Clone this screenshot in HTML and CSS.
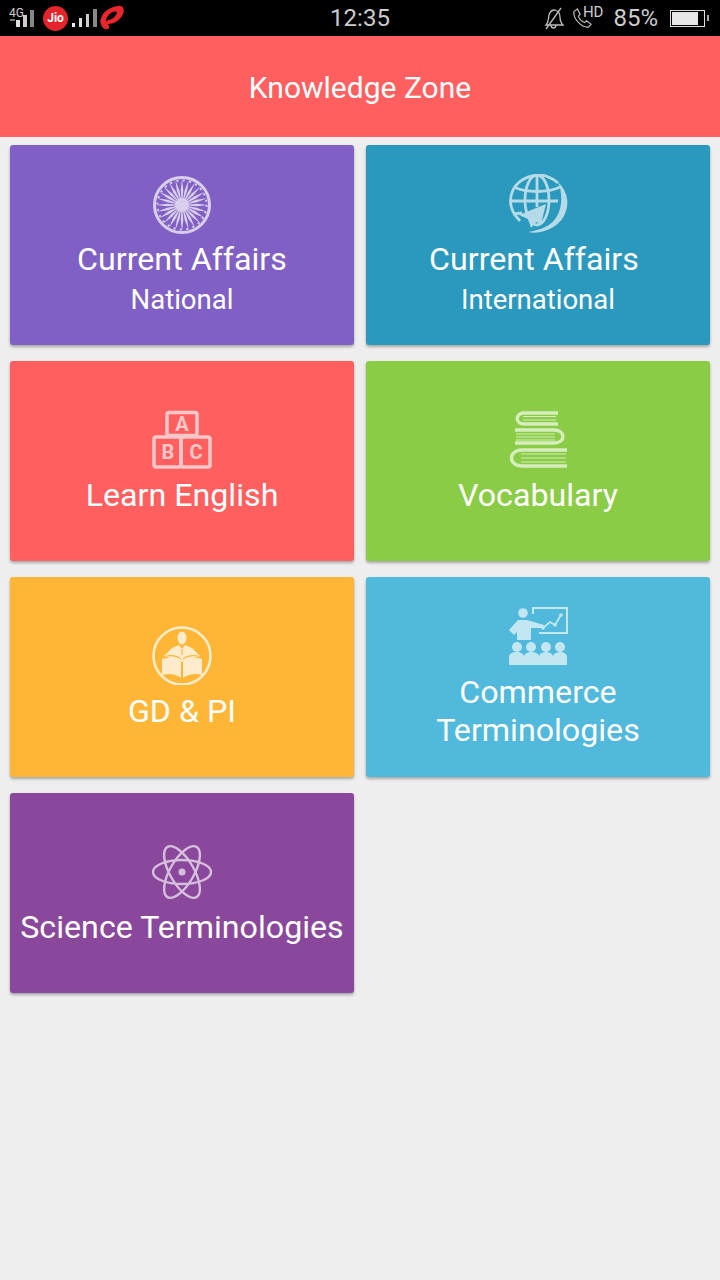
FILE: index.html
```html
<!DOCTYPE html>
<html>
    <head>
        <meta charset="utf-8">
        <title>Knowledge Zone</title>
        <link rel="stylesheet" href="styles.css">
    </head>
    <body>
        <div class="status-bar">
            <div class="status-left">
                <svg class="net" width="28" height="26" viewBox="0 0 28 26">
                    <text x="1" y="12" class="net-text">4G</text>
                    <rect x="2" y="14" width="5" height="2" fill="#777"/>
                    <rect x="8" y="15" width="4" height="7" fill="#ddd"/>
                    <rect x="15" y="10" width="4" height="12" fill="#ccc"/>
                    <rect x="22" y="5" width="4" height="17" fill="#888"/>
                </svg>
                <div class="jio">Jio</div>
                <svg class="net2" width="29" height="26" viewBox="0 0 29 26">
                    <rect x="1" y="18" width="3" height="4" fill="#eee"/>
                    <rect x="8" y="13" width="3" height="9" fill="#ddd"/>
                    <rect x="15" y="9" width="3" height="13" fill="#ccc"/>
                    <rect x="22" y="4" width="4" height="18" fill="#888"/>
                </svg>
                <svg class="airtel" width="24" height="26" viewBox="0 0 24 26">
                    <path d="M1 14C2 7 10 2 18 1C23 0 25 4 23 9C21 14 15 19 8 19C5 19 6 16 8 15C12 15 16 11 17 8C17 6 14 6 11 8C8 10 6 13 6 16C7 19 10 20 9 23C7 26 2 24 1 19C0 17 0 15 1 14Z" fill="#e8262c"/>
                </svg>
            </div>
            <div class="clock">12:35</div>
            <div class="status-right">
                <svg width="20" height="24" viewBox="0 0 20 24" class="bell">
                    <path d="M2 19C5 16 4 13 5 9C6 5 9 4 11 4C14 5 16 8 16 11C16 14 17 17 19 19Z M7 19C7 23 12 23 12 19 M2 23L17 2" fill="none" stroke="#bbb" stroke-width="1.300"/>
                </svg>
                <div class="call">
                    <svg width="20" height="24" viewBox="0 0 22 24">
                        <path d="M2 5L6 2L9 8L7 10C8 13 11 16 14 17L16 15L21 19L18 22C11 23 1 13 2 5Z" fill="none" stroke="#bbb" stroke-width="1.300"/>
                    </svg>
                    <span class="hd">HD</span>
                </div>
                <div class="percent">85%</div>
                <div class="battery"><div class="battery-level"></div></div>
                <div class="battery-tip"></div>
            </div>
        </div>
        <div class="app-header">Knowledge Zone</div>
        <div class="grid">
            <div class="card purple">
                <svg class="icon wheel" viewBox="0 0 60 60">
                    <circle cx="30" cy="30" r="27.500" fill="none" stroke="#fff" stroke-width="3"/>
                    <circle cx="30" cy="30" r="24.600" fill="none" stroke="#fff" stroke-width="2" stroke-dasharray="2 4.440"/>
                    <circle cx="30" cy="30" r="7" fill="#fff"/>
                    <g fill="#fff">
                        <path id="spoke" d="M30 4L31.300 15L30 30L31.300 45L30 56L28.700 45L30 30L28.700 15Z"/>
                        <use href="#spoke" transform="rotate(15 30 30)"/>
                        <use href="#spoke" transform="rotate(30 30 30)"/>
                        <use href="#spoke" transform="rotate(45 30 30)"/>
                        <use href="#spoke" transform="rotate(60 30 30)"/>
                        <use href="#spoke" transform="rotate(75 30 30)"/>
                        <use href="#spoke" transform="rotate(90 30 30)"/>
                        <use href="#spoke" transform="rotate(105 30 30)"/>
                        <use href="#spoke" transform="rotate(120 30 30)"/>
                        <use href="#spoke" transform="rotate(135 30 30)"/>
                        <use href="#spoke" transform="rotate(150 30 30)"/>
                        <use href="#spoke" transform="rotate(165 30 30)"/>
                    </g>
                </svg>
                <div class="title">Current Affairs</div>
                <div class="sub">National</div>
            </div>
            <div class="card teal">
                <svg class="icon globe" viewBox="0 0 60 60">
                    <g fill="none" stroke="#fff" stroke-width="2.800">
                        <path d="M12 47C3 38 0 27 5 16C11 4 26 -1 38 2C43 4 47 6 50 9"/>
                        <ellipse cx="29" cy="26" rx="12" ry="25"/>
                        <path d="M29 1V33M6 13C18 19 40 19 52 13M2 27H50M5 40L14 39"/>
                    </g>
                    <path d="M50 8C60 18 62 30 56 42C50 53 35 61 20 58C32 56 44 52 49 42C54 34 55 20 50 8Z" fill="#fff"/>
                    <path d="M38 30L11 41L20 45L23 54L28 48L33 50Z" fill="#fff"/>
                </svg>
                <div class="title offset">Current Affairs</div>
                <div class="sub">International</div>
            </div>
            <div class="card red">
                <svg class="icon" viewBox="0 0 60 60">
                    <g fill="none" stroke="#fff" stroke-width="3.500">
                        <rect x="15" y="3.500" width="30" height="23" rx="2"/>
                        <rect x="2" y="28" width="27" height="30" rx="2"/>
                        <rect x="29" y="28" width="29" height="30" rx="2"/>
                    </g>
                    <text x="30" y="22" class="block-letter">A</text>
                    <text x="16" y="50" class="block-letter">B</text>
                    <text x="44" y="50" class="block-letter">C</text>
                </svg>
                <div class="title">Learn English</div>
            </div>
            <div class="card green">
                <svg class="icon" viewBox="0 0 60 60">
                    <g fill="none" stroke="#fff">
                        <path d="M50 4H16C7 4 7 15 16 15H50" stroke-width="3.400"/>
                        <path d="M7 21H46C58 21 58 34 46 34H7" stroke-width="3.400"/>
                        <path d="M59 41H14C0 41 0 57 14 57H59" stroke-width="3.400"/>
                        <path d="M15 7.500H48M15 11H48M8 25H47M8 28H47M8 31H47M13 45H58M13 49H58M13 53H58" stroke-width="1.200"/>
                    </g>
                </svg>
                <div class="title">Vocabulary</div>
            </div>
            <div class="card orange">
                <svg class="icon book" viewBox="0 -1 60 60">
                    <circle cx="30" cy="30" r="28.500" fill="none" stroke="#fff" stroke-width="2.600"/>
                    <ellipse cx="30" cy="12" rx="4.500" ry="6.500" fill="#fff"/>
                    <path d="M12 30L20 22L27 19L30 23L33 19L40 22L48 30L30 36Z" fill="#fff"/>
                    <path d="M10 33C16 31 24 32 29 36V52C24 48 16 47 10 49Z M50 33C44 31 36 32 31 36V52C36 48 44 47 50 49Z" fill="#fff"/>
                    <path d="M30 23V29M14 30C20 29 25 30 29 33M46 30C40 29 35 30 31 33" fill="none" stroke="#ffb637" stroke-width="1.200"/>
                </svg>
                <div class="title">GD &amp; PI</div>
            </div>
            <div class="card sky">
                <svg class="icon" viewBox="0 0 60 60">
                    <path d="M24 2H59V27H31" fill="none" stroke="#fff" stroke-width="2"/>
                    <path d="M25 2V8" stroke="#fff" stroke-width="2"/>
                    <path d="M35 22L42 16L47 19L53 9" fill="none" stroke="#fff" stroke-width="1.800"/>
                    <circle cx="35" cy="22" r="1.800" fill="#fff"/>
                    <circle cx="47" cy="19" r="1.800" fill="#fff"/>
                    <circle cx="53" cy="9" r="1.800" fill="#fff"/>
                    <circle cx="15" cy="7" r="4.800" fill="#fff"/>
                    <path d="M1 24L10 14H19L36 19L35 22L23 22V34H9V26L6 29Z" fill="#fff"/>
                    <g fill="#fff">
                        <circle cx="9" cy="41" r="5"/>
                        <circle cx="23" cy="41" r="5"/>
                        <circle cx="38" cy="41" r="5"/>
                        <circle cx="52" cy="41" r="5"/>
                        <path d="M1 59V51C1 47 5 46 9 46C12 46 15 47 16 50C17 47 20 46 23 46C27 46 30 47 31 50C32 47 35 46 38 46C41 46 44 47 45 50C46 47 49 46 52 46C56 46 59 48 59 51V59Z"/>
                    </g>
                </svg>
                <div class="title">Commerce<br>Terminologies</div>
            </div>
            <div class="card plum">
                <svg class="icon" viewBox="0 -1 60 60">
                    <g fill="none" stroke="#fff" stroke-width="2.400">
                        <ellipse cx="30" cy="30" rx="29" ry="12"/>
                        <ellipse cx="30" cy="30" rx="29" ry="12" transform="rotate(60 30 30)"/>
                        <ellipse cx="30" cy="30" rx="29" ry="12" transform="rotate(120 30 30)"/>
                    </g>
                    <circle cx="30" cy="30" r="3.500" fill="#fff"/>
                </svg>
                <div class="title">Science Terminologies</div>
            </div>
        </div>
    </body>
</html>
```

FILE: styles.css
```css
*{
    margin: 0px;
    padding: 0px;
    box-sizing: border-box;
}
body{
    background-color: #eeeeee;
    font-family: Roboto, "Liberation Sans", sans-serif;
    width: 720px;
    height: 1280px;
    overflow: hidden;
}
.status-bar{
    height: 36px;
    background-color: #000;
    color: #ccc;
    display: grid;
    grid-template-columns: 1fr auto 1fr;
    align-items: center;
}
.status-left{
    display: flex;
    align-items: center;
    padding-left: 8px;
}
.net-text{
    font-size: 12px;
    fill: #ccc;
}
.jio{
    width: 25px;
    height: 25px;
    border-radius: 50%;
    background-color: #e3242b;
    color: #fff;
    font-size: 12px;
    font-weight: bold;
    line-height: 25px;
    text-align: center;
    margin-left: 7px;
}
.net2{
    margin-left: 3px;
}
.clock{
    font-size: 24px;
}
.status-right{
    display: flex;
    align-items: center;
    justify-content: flex-end;
    padding-right: 11px;
}
.bell{
    margin-right: 1px;
}
.call{
    display: flex;
    margin-left: 7px;
}
.hd{
    font-size: 15px;
    margin: -3px 0px 0px -9px;
}
.percent{
    font-size: 24px;
    margin-left: 10px;
}
.battery{
    width: 35px;
    height: 17px;
    border: 1px solid #ddd;
    margin-left: 12px;
    padding: 1px;
}
.battery-level{
    width: 85%;
    height: 100%;
    background-color: #e6e6e6;
}
.battery-tip{
    width: 2px;
    height: 6px;
    background-color: #aaa;
    margin-left: 2px;
}
.app-header{
    height: 101px;
    padding-top: 2px;
    background-color: #ff5f5f;
    color: #fff;
    font-size: 30px;
    display: flex;
    align-items: center;
    justify-content: center;
}
.grid{
    display: grid;
    grid-template-columns: 344px 344px;
    grid-auto-rows: 200px;
    column-gap: 12px;
    row-gap: 16px;
    padding: 8px 10px;
}
.card{
    border-radius: 3px;
    color: #fff;
    box-shadow: 0px 2px 3px rgba(0,0,0,0.3);
    display: flex;
    flex-direction: column;
    align-items: center;
    justify-content: center;
    text-align: center;
}
.purple{ background-color: #8060c4; }
.teal{ background-color: #2b99bd; }
.red{ background-color: #ff5f5f; }
.green{ background-color: #8bcc46; }
.orange{ background-color: #ffb637; }
.sky{ background-color: #50b9dc; }
.plum{ background-color: #8a489c; }
.icon{
    width: 60px;
    height: 60px;
    opacity: 0.65;
    margin-bottom: 7px;
}
.wheel{
    margin-top: 5px;
    margin-bottom: 5px;
    opacity: 0.7;
}
.globe{
    margin-top: 4px;
    margin-bottom: 6px;
}
.book{
    opacity: 0.75;
}
.block-letter{
    font-family: Roboto, sans-serif;
    font-size: 20px;
    font-weight: bold;
    fill: #fff;
    text-anchor: middle;
}
.title{
    font-size: 32.2px;
    line-height: 38px;
    white-space: nowrap;
}
.offset{
    padding-right: 8px;
}
.sub{
    font-size: 27.5px;
    line-height: 40px;
    margin-top: 2px;
}
```
